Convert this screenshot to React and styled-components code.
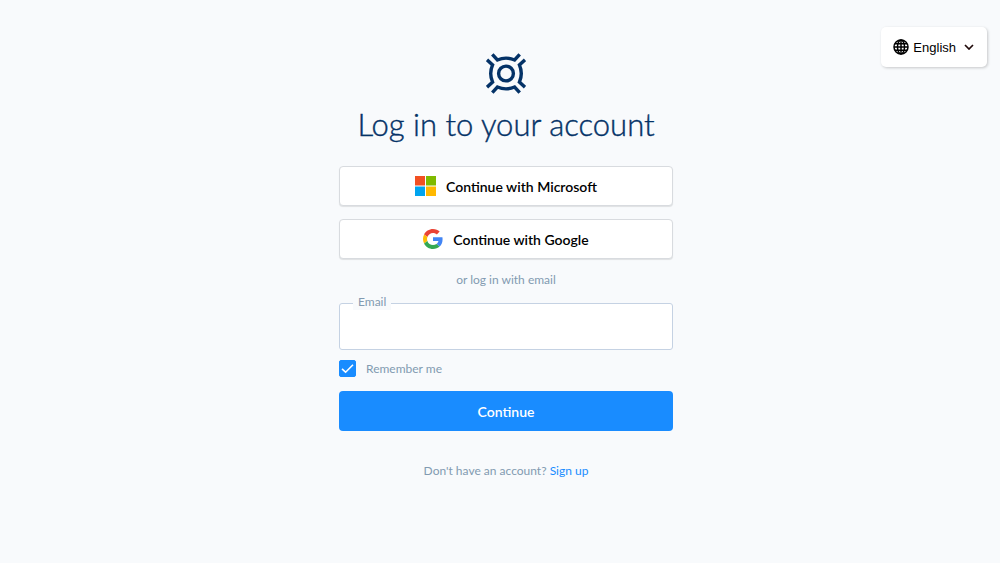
import { useState } from "react";
import styled, { createGlobalStyle } from "styled-components";

export default function App() {
    const [email, setEmail] = useState("");
    const [remember, setRemember] = useState(true);

    return (
        <>
            <GlobalStyle />
            <Page>
                <LanguageMenu type="button" aria-haspopup="listbox">
                    <GlobeIcon />
                    <span>English</span>
                    <ChevronIcon />
                </LanguageMenu>
                <Main>
                    <Logo />
                    <Title>Log in to your account</Title>
                    <SocialButton type="button">
                        <MicrosoftIcon />
                        Continue with Microsoft
                    </SocialButton>
                    <SocialButton type="button">
                        <GoogleIcon />
                        Continue with Google
                    </SocialButton>
                    <Divider>or log in with email</Divider>
                    <Form onSubmit={(e) => e.preventDefault()}>
                        <Field>
                            <FieldLabel htmlFor="email">Email</FieldLabel>
                            <EmailInput
                                id="email"
                                type="email"
                                value={email}
                                onChange={(e) => setEmail(e.target.value)}
                            />
                        </Field>
                        <Remember>
                            <Checkbox
                                id="remember"
                                type="checkbox"
                                checked={remember}
                                onChange={(e) => setRemember(e.target.checked)}
                            />
                            <CheckMark viewBox="0 0 17 17" aria-hidden="true">
                                <path d="M3 8.8l3.6 3.4 7.4-7.4" />
                            </CheckMark>
                            <label htmlFor="remember">Remember me</label>
                        </Remember>
                        <SubmitButton type="submit">Continue</SubmitButton>
                    </Form>
                    <SignUp>
                        Don't have an account? <a href="#signup">Sign up</a>
                    </SignUp>
                </Main>
            </Page>
        </>
    );
}

function Logo() {
    return (
        <svg width="40" height="41" viewBox="0 0 40 41" fill="none" stroke="#043267" strokeWidth="3.4" aria-hidden="true">
            <circle cx="20" cy="20.5" r="7.4" />
            <path d="M6.3 1.4l5.1 5.6q8.6-3.8 17.2 0l5.1-5.6" />
            <path d="M6.3 39.6l5.1-5.6q8.6 3.8 17.2 0l5.1 5.6" />
            <path d="M1 6.8l5.6 5.1q-3.8 8.6 0 17.2l-5.6 5.1" />
            <path d="M39 6.8l-5.6 5.1q3.8 8.6 0 17.2l5.6 5.1" />
        </svg>
    );
}

function GlobeIcon() {
    return (
        <svg width="16" height="16" viewBox="0 0 16 16" fill="none" stroke="#000" strokeWidth="1.5" aria-hidden="true">
            <circle cx="8" cy="8" r="7" />
            <ellipse cx="8" cy="8" rx="3.5" ry="7" />
            <path d="M8 1v14M1 8h14M2 4.7h12M2 11.3h12" />
        </svg>
    );
}

function ChevronIcon() {
    return (
        <svg width="10" height="6" viewBox="0 0 10 6" fill="none" stroke="#200a0a" strokeWidth="1.7" aria-hidden="true">
            <path d="M1 1l4 4 4-4" />
        </svg>
    );
}

function MicrosoftIcon() {
    return (
        <svg width="21" height="20" viewBox="0 0 21 20" aria-hidden="true">
            <path fill="#f25022" d="M0 0h10v9.5H0z" />
            <path fill="#7fba00" d="M11 0h10v9.5H11z" />
            <path fill="#00a4ef" d="M0 10.5h10V20H0z" />
            <path fill="#ffb900" d="M11 10.5h10V20H11z" />
        </svg>
    );
}

function GoogleIcon() {
    return (
        <svg width="20" height="20" viewBox="0 0 48 48" aria-hidden="true">
            <path fill="#ea4335" d="M24 9.5c3.54 0 6.71 1.22 9.21 3.6l6.85-6.85C35.9 2.38 30.47 0 24 0 14.62 0 6.51 5.38 2.56 13.22l7.98 6.19C12.43 13.72 17.74 9.5 24 9.5z" />
            <path fill="#4285f4" d="M46.98 24.55c0-1.57-.15-3.09-.38-4.55H24v9.02h12.94c-.58 2.96-2.26 5.48-4.78 7.18l7.73 6c4.51-4.18 7.09-10.36 7.09-17.65z" />
            <path fill="#fbbc05" d="M10.53 28.59c-.48-1.45-.76-2.99-.76-4.59s.27-3.14.76-4.59l-7.98-6.19C.92 16.46 0 20.12 0 24c0 3.88.92 7.54 2.56 10.78l7.97-6.19z" />
            <path fill="#34a853" d="M24 48c6.48 0 11.93-2.13 15.89-5.81l-7.73-6c-2.15 1.45-4.92 2.3-8.16 2.3-6.26 0-11.57-4.22-13.47-9.91l-7.98 6.19C6.51 42.62 14.62 48 24 48z" />
        </svg>
    );
}

const GlobalStyle = createGlobalStyle`
    * {
        box-sizing: border-box;
    }
    body {
        margin: 0;
        background-color: #f8fafc;
        font-family: Lato, sans-serif;
    }
`;
const Page = styled.div`
    position: relative;
    min-height: 100vh;
    padding: 53px 0 0 12px;
`;
const LanguageMenu = styled.button`
    position: absolute;
    top: 27px;
    right: 13px;
    display: flex;
    align-items: center;
    gap: 4px;
    height: 40px;
    padding: 0 13px 0 12px;
    border: none;
    border-radius: 5px;
    background-color: #fff;
    box-shadow: 1px 1px 3px rgba(0, 0, 0, 0.2);
    color: #000;
    font-family: "Liberation Sans", sans-serif;
    font-size: 13px;

    svg:last-child {
        margin-left: 4px;
    }
`;
const Main = styled.main`
    display: flex;
    flex-direction: column;
    align-items: center;
    width: 100%;
    max-width: 334px;
    margin: 0 auto;
`;
const Title = styled.h1`
    margin: 10px 0 22px;
    color: #043267;
    font-size: 31px;
    font-weight: 300;
    line-height: 40px;
    white-space: nowrap;
    -webkit-text-stroke: 0.4px #043267;
`;
const BaseButton = styled.button`
    display: flex;
    justify-content: center;
    align-items: center;
    width: 100%;
    height: 40px;
    border-radius: 4px;
    font-family: inherit;
    font-size: 14px;
    font-weight: 600;
    cursor: pointer;
`;
const SocialButton = styled(BaseButton)`
    gap: 10px;
    margin-bottom: 13px;
    border: 1px solid #d8dbdf;
    background-color: #fff;
    box-shadow: 0 1px 1px rgba(0, 0, 0, 0.1);
    color: #000;
`;
const Divider = styled.p`
    margin: 0 0 15px;
    color: #829ab1;
    font-size: 12px;
    line-height: 16px;
`;
const Form = styled.form`
    width: 100%;
`;
const Field = styled.div`
    position: relative;
`;
const FieldLabel = styled.label`
    position: absolute;
    top: -9px;
    left: 14px;
    padding: 0 5px;
    background-color: #f8fafc;
    color: #829ab1;
    font-size: 12px;
    line-height: 16px;
`;
const EmailInput = styled.input`
    display: block;
    width: 100%;
    height: 47px;
    padding: 0 18px;
    border: 1px solid #c5d2e3;
    border-radius: 3px;
    background-color: #fff;
    color: #043267;
    font-family: inherit;
    font-size: 14px;
`;
const Remember = styled.div`
    position: relative;
    display: flex;
    align-items: center;
    gap: 10px;
    margin: 10px 0 14px;
    color: #829ab1;
    font-size: 12px;
    line-height: 16px;
`;
const Checkbox = styled.input`
    appearance: none;
    width: 17px;
    height: 17px;
    margin: 0;
    border: 1px solid #198cff;
    border-radius: 2px;
    background-color: #fff;

    &:checked {
        background-color: #198cff;
    }
`;
const CheckMark = styled.svg`
    position: absolute;
    top: 0;
    left: 0;
    width: 17px;
    height: 17px;
    fill: none;
    stroke: #fff;
    stroke-width: 1.6;
    pointer-events: none;
`;
const SubmitButton = styled(BaseButton)`
    border: none;
    background-color: #198cff;
    color: #fff;
`;
const SignUp = styled.p`
    margin: 32px 0 0;
    color: #829ab1;
    font-size: 12px;
    line-height: 16px;

    a {
        color: #198cff;
        text-decoration: none;
    }
`;
